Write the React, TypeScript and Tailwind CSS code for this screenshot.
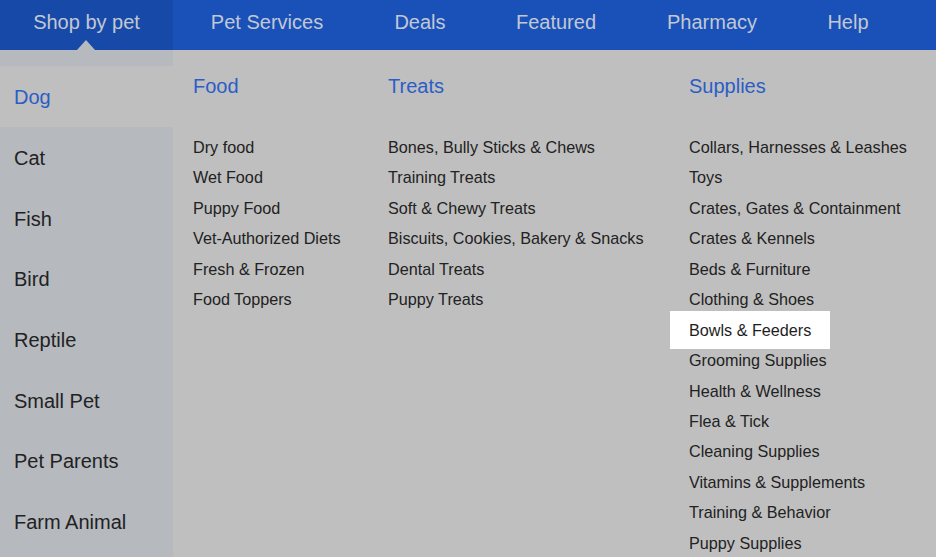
import React from "react";

const navItems = [
  { label: "Pet Services", w: "w-[188px]" },
  { label: "Deals", w: "w-[118px]" },
  { label: "Featured", w: "w-[154px]" },
  { label: "Pharmacy", w: "w-[158px]" },
  { label: "Help", w: "w-[114px]" },
];

const pets = ["Dog", "Cat", "Fish", "Bird", "Reptile", "Small Pet", "Pet Parents", "Farm Animal"];

const food = ["Dry food", "Wet Food", "Puppy Food", "Vet-Authorized Diets", "Fresh & Frozen", "Food Toppers"];
const treats = [
  "Bones, Bully Sticks & Chews",
  "Training Treats",
  "Soft & Chewy Treats",
  "Biscuits, Cookies, Bakery & Snacks",
  "Dental Treats",
  "Puppy Treats",
];
const supplies = [
  "Collars, Harnesses & Leashes",
  "Toys",
  "Crates, Gates & Containment",
  "Crates & Kennels",
  "Beds & Furniture",
  "Clothing & Shoes",
  "Bowls & Feeders",
  "Grooming Supplies",
  "Health & Wellness",
  "Flea & Tick",
  "Cleaning Supplies",
  "Vitamins & Supplements",
  "Training & Behavior",
  "Puppy Supplies",
];

function Column({ title, items, width }: { title: string; items: string[]; width: string }) {
  return (
    <div className={`${width} flex flex-col`}>
      <div className="text-[20px] leading-[24px] text-[#2a5ec6]">{title}</div>
      <ul className="mt-[34px] flex flex-col">
        {items.map((it) =>
          it === "Bowls & Feeders" ? (
            <li
              key={it}
              className="h-[30.45px] leading-[30.45px] text-[16.2px] text-[#1e1e1e] w-fit bg-white -ml-[19px] px-[19px] -my-[4px] py-[4px] box-content"
            >
              {it}
            </li>
          ) : (
            <li key={it} className="h-[30.45px] leading-[30.45px] text-[16.2px] text-[#222222] whitespace-nowrap">
              {it}
            </li>
          )
        )}
      </ul>
    </div>
  );
}

export default function App() {
  return (
    <div
      className="w-[936px] h-[557px] overflow-hidden bg-[#bfbfbf] flex flex-col"
      style={{ fontFamily: '"Liberation Sans", Arial, sans-serif' }}
    >
      <nav className="h-[50px] bg-[#1951b9] flex items-stretch shrink-0">
        <div className="relative w-[173px] bg-[#174aa8] flex items-center justify-center text-[20px] text-[#c2c8d2]">
          <span className="-mt-[6px]">Shop by pet</span>
          <span className="absolute left-[77px] bottom-0 w-0 h-0 border-l-[9px] border-r-[9px] border-b-[10px] border-l-transparent border-r-transparent border-b-[#b6b9be]" />
        </div>
        {navItems.map((n) => (
          <div
            key={n.label}
            className={`${n.w} flex items-center justify-center text-[20px] text-[#c2c8d2]`}
          >
            <span className="-mt-[6px]">{n.label}</span>
          </div>
        ))}
      </nav>
      <div className="flex flex-1 min-h-0">
        <aside className="w-[173px] shrink-0 bg-[#b6b9be] pt-[16px] flex flex-col">
          {pets.map((p, i) => (
            <div
              key={p}
              className={`h-[60.7px] shrink-0 flex items-center pl-[14px] pt-[2px] text-[20px] ${
                i === 0 ? "bg-[#bfbfbf] text-[#2a5ec6]" : "text-[#222222]"
              }`}
            >
              {p}
            </div>
          ))}
        </aside>
        <main className="flex-1 flex pl-[20px] pt-[24px]">
          <Column title="Food" items={food} width="w-[195px]" />
          <Column title="Treats" items={treats} width="w-[301px]" />
          <Column title="Supplies" items={supplies} width="flex-1" />
        </main>
      </div>
    </div>
  );
}
